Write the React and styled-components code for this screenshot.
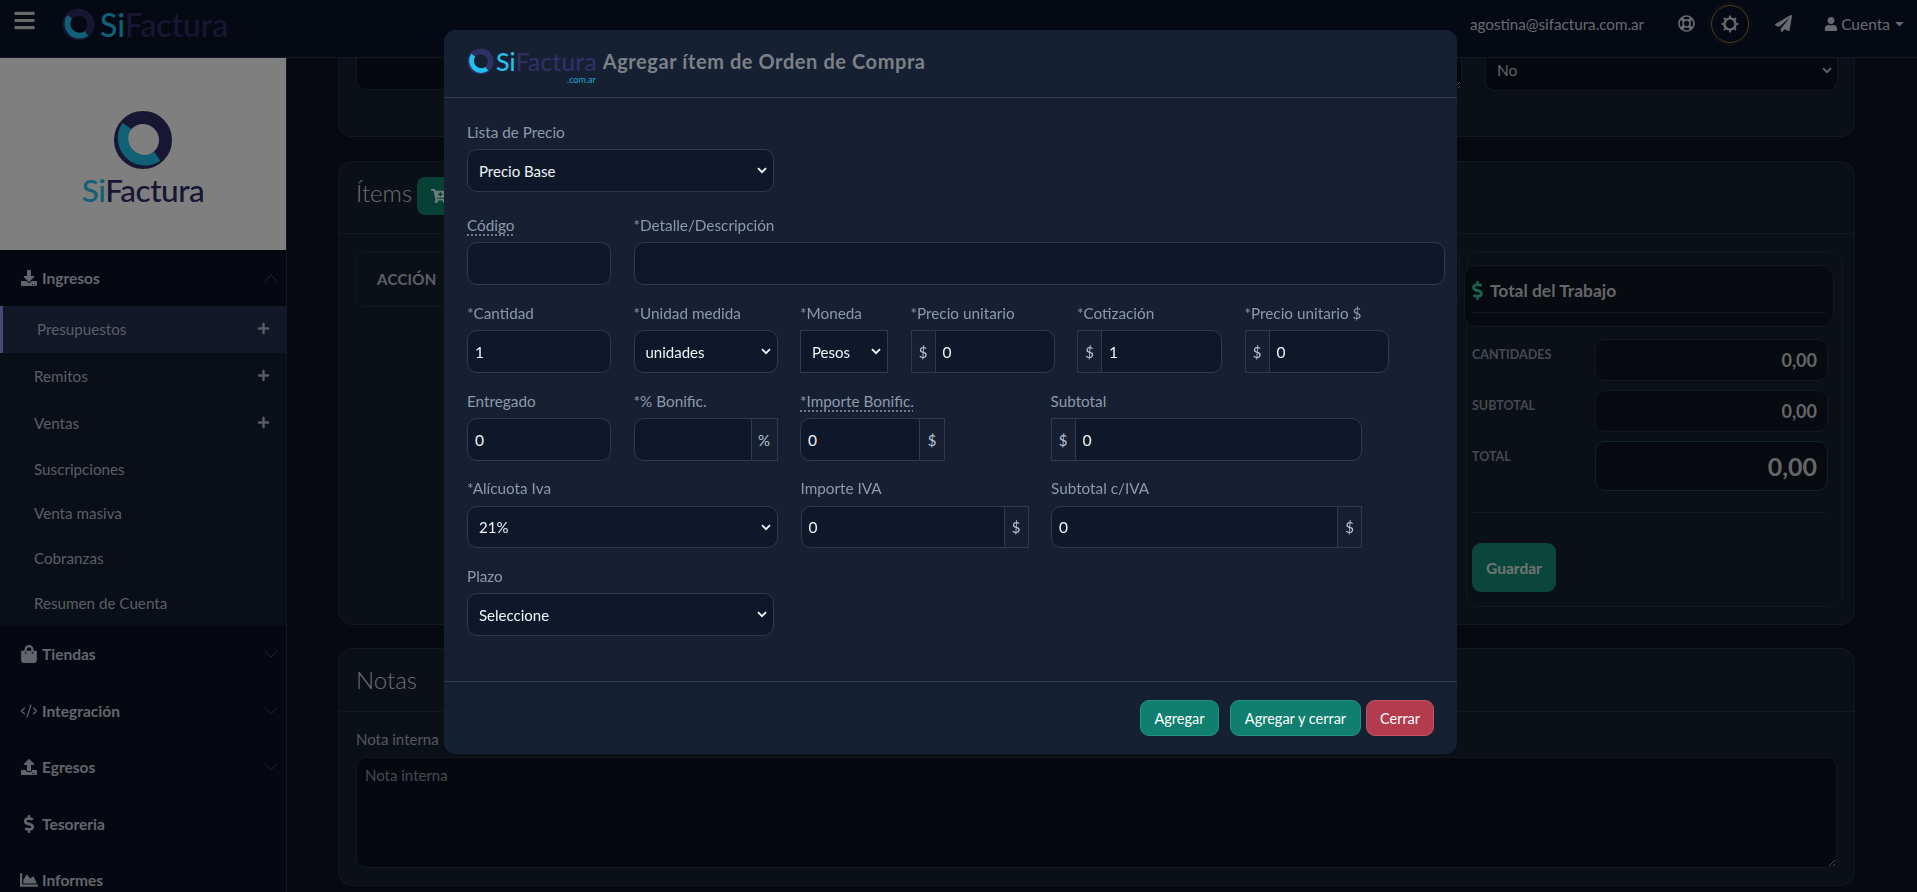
import React from "react";
import styled, { createGlobalStyle } from "styled-components";
import {
  FaBars, FaDownload, FaShoppingBag, FaUpload, FaDollarSign, FaChartArea,
  FaPlus, FaRegLifeRing, FaPaperPlane, FaUser, FaCartPlus, FaCaretDown,
} from "react-icons/fa";
import { ChevronDown, ChevronUp, CodeXml } from "lucide-react";

const chevronSvg = (color) =>
  `url("data:image/svg+xml,%3Csvg xmlns='http://www.w3.org/2000/svg' viewBox='0 0 10 7'%3E%3Cpath d='M1 1.2l4 4 4-4' fill='none' stroke='${color}' stroke-width='1.9'/%3E%3C/svg%3E")`;

const Global = createGlobalStyle`
  html, body { margin: 0; padding: 0; height: 100%; overflow: hidden; background: #0c121e; }
  * { box-sizing: border-box; }
  body { font-family: Lato, "Open Sans", sans-serif; font-size: 15px; color-scheme: dark; }
`;

const Page = styled.div`
  height: 892px; overflow: hidden; display: flex; flex-direction: column; background: #0c121e;
`;
const Navbar = styled.header`
  height: 58px; flex: none; display: flex; align-items: center; background: #0a1228;
  border-bottom: 1px solid #28304a; padding: 0 11px 10px 13px;
`;
const Burger = styled.span`
  color: #d0d3d8; font-size: 23px; display: flex; margin: -6px 26px 0 0;
`;
const LogoWrap = styled.span`
  display: inline-flex; align-items: center; gap: ${(p) => p.$gap}px; position: relative; margin-top: ${(p) => p.$top ?? 0}px;
`;
const LogoText = styled.span`
  font-size: ${(p) => p.$size}px; font-weight: 500; color: #2f2f66; line-height: 1; letter-spacing: ${(p) => p.$track}px;
  b { font-weight: 500; color: #22c0ec; }
`;
const NavRight = styled.div`
  margin-left: auto; display: flex; align-items: center; color: #d0d4da;
`;
const Email = styled.span`
  font-size: 15.2px; margin-right: 34px; color: #d0d4da;
`;
const NavIcon = styled.span`
  display: flex; font-size: 17px; color: #d0d4da;
`;
const GearButton = styled.span`
  width: 38px; height: 38px; border-radius: 50%; border: 1px solid #a8741a; margin: 0 26px 0 16px;
  display: flex; align-items: center; justify-content: center;
  box-shadow: 0 0 0 3px rgba(120, 120, 130, 0.1);
`;
const Account = styled.span`
  display: flex; align-items: center; gap: 3px; margin-left: 32px; font-size: 15.5px;
`;

const Body = styled.div`
  flex: 1; display: flex; min-height: 0;
`;
const Sidebar = styled.aside`
  width: 287px; flex: none; background: #0a1022; border-right: 1px solid #28304a; overflow: hidden;
`;
const BrandBox = styled.div`
  height: 192px; background: #fff; display: flex; flex-direction: column; align-items: center; padding-top: 52px; gap: 5px;
`;
const SectionRow = styled.div`
  height: 56.4px; display: flex; align-items: center; padding: 0 3px 0 20px; color: #c4cbd6; font-weight: 700; font-size: 15.5px;
`;
const SectionIcon = styled.span`
  width: 22px; display: flex; justify-content: center; font-size: ${(p) => p.$size ?? 16}px; flex: none; transform: translateX(-2px);
`;
const SectionLabel = styled.span`
  flex: 1;
`;
const Chevron = styled.span`
  display: flex; color: #4a5468;
`;
const SubMenu = styled.div`
  background: #141c2c;
`;
const SubRow = styled.div`
  height: ${(p) => (p.$plus ? 47 : 44.7)}px; display: flex; align-items: center; justify-content: space-between;
  padding: 0 16px 2px 34px; color: #b4bcc9; font-size: 15.2px;
  background: ${(p) => (p.$active ? "#243050" : "transparent")};
  border-left: ${(p) => (p.$active ? "3px solid #8f94f0" : "none")};
`;
const PlusIcon = styled.span`
  display: flex; font-size: 13px; color: #aeb7c6;
`;

const Main = styled.main`
  flex: 1; min-width: 0; padding: 0 62px 0 51px; overflow: hidden;
`;
const Card = styled.section`
  border: 1px solid #262e40; border-radius: 14px; background: #161e2c; margin-bottom: 23px;
`;
const TopCard = styled(Card)`
  height: 79px; border-top: none; border-radius: 0 0 14px 14px; padding: 0 17px; display: flex; gap: 23px; align-items: flex-start; margin-bottom: 24px;
`;
const DarkArea = styled.textarea`
  width: 1106px; height: 32px; flex: none; background: #0a101c; border: 1px solid #262e40; border-top: none; border-radius: 0 0 10px 10px;
  resize: vertical; color: #ccc; outline: none;
`;
const DarkSelect = styled.select`
  appearance: none; width: 353px; height: 33px; flex: none; border: 1px solid #262e40; border-top: none; border-radius: 0 0 10px 10px;
  background: #0a101c ${chevronSvg("%23c2c8d0")} no-repeat right 5px top 9px / 10px 7px;
  color: #c2c8d0; font: inherit; font-size: 15.5px; padding: 0 6px 8px 11px;
`;
const CardHeader = styled.div`
  height: ${(p) => p.$h}px; display: flex; align-items: center; gap: 5px; padding: 0 17px ${(p) => p.$pb}px; border-bottom: 1px solid #262e40;
`;
const CardTitle = styled.h2`
  margin: 0 0 ${(p) => p.$mb ?? 0}px; font-size: 24px; font-weight: 300; color: #d7dade;
`;
const GreenIconButton = styled.button`
  width: 80px; height: 38px; border: none; border-radius: 8px; background: #0f8068; color: #dfe; font-size: 16px;
  display: flex; align-items: center; padding-left: 14px;
`;
const ItemsBody = styled.div`
  display: flex; padding: 17px 11px 17px 16px; gap: 6px;
`;
const TableBox = styled.div`
  width: 1106px; height: 56px; border: 1px solid #262e40; border-radius: 10px; padding: 0 21px; display: flex; align-items: center;
  font-size: 15px; font-weight: 700; color: #b9c0cb; letter-spacing: 0.3px;
`;
const TotalsBox = styled.div`
  width: 377px; height: 356px; border: 1px solid #262e40; border-radius: 12px; padding: 13px 15px 0 5px;
`;
const TotalsHead = styled.div`
  width: 370px; margin: 0 0 12px -8px; height: 62px; border: 1px solid #262e40; border-radius: 12px; background: #0e141f; padding: 0 7px;
`;
const TotalsTitle = styled.div`
  height: 47px; padding-top: 3px; display: flex; align-items: center; gap: 3px; border-bottom: 1px solid #262e40; font-size: 17.4px; font-weight: 700; color: #c8ccd2;
  svg { color: #35c69c; font-size: 19px; margin-left: -4px; }
`;
const TotalRow = styled.div`
  display: grid; grid-template-columns: 123px 233px; margin-bottom: 9px; font-size: 12.5px; font-weight: 700; color: #8a92a2;
`;
const TotalLabel = styled.span`
  padding-top: 6px; line-height: 20px;
`;
const TotalValue = styled.div`
  height: ${(p) => (p.$big ? 50 : 42)}px; border: 1px solid ${(p) => (p.$big ? "#1d4a4c" : "#262e40")}; border-radius: 10px; background: #0e141f;
  display: flex; align-items: center; justify-content: flex-end; padding-right: 10px;
  font-size: ${(p) => (p.$big ? 25 : 18)}px; font-weight: 700; color: #c8ccd0;
`;
const TotalsRule = styled.hr`
  margin: 21px 0 30px; border: none; border-top: 1px solid #262e40;
`;
const SaveButton = styled.button`
  width: 84px; height: 49px; border: none; border-radius: 9px; background: #158d72; color: #e2e6e4; font: inherit; font-weight: 700; font-size: 15.5px;
`;
const NoteBody = styled.div`
  padding: 17px 17px 17px;
`;
const NoteLabel = styled.div`
  font-size: 15px; color: #a8b0bd; line-height: 20px; margin-bottom: 8px;
`;
const NoteArea = styled.textarea`
  display: block; width: 100%; height: 111px; background: #0a101c; border: 1px solid #262e40; border-radius: 10px; padding: 8px 8px;
  font: inherit; font-size: 15px; outline: none; color: #ccc;
  &::placeholder { color: #8a93a3; opacity: 1; }
`;

const Backdrop = styled.div`
  position: fixed; inset: 0; background: rgba(0, 0, 0, 0.5);
`;
const ModalLayer = styled.div`
  position: fixed; inset: 0; display: flex; justify-content: center; align-items: flex-start; padding: 30px 16px 0 0;
`;
const Modal = styled.div`
  width: 1013px; height: 724px; background: #172032; border-radius: 12px; display: flex; flex-direction: column;
`;
const ModalHeader = styled.div`
  height: 68px; flex: none; display: flex; align-items: center; gap: 6px; padding: 0 23px 5px; background: #152033; border-bottom: 1px solid #2c3a4e;
  border-radius: 12px 12px 0 0;
`;
const ComAr = styled.span`
  position: absolute; right: 1px; bottom: -9px; font-size: 9px; color: #22a8d0; line-height: 1;
`;
const ModalTitle = styled.h5`
  margin: 0; font-size: 20px; font-weight: 700; color: #7d8087; letter-spacing: 0.58px;
`;
const ModalBody = styled.div`
  flex: 1; padding: 24px 0 0 23px; display: flex; flex-direction: column;
`;
const FormRow = styled.div`
  display: grid; grid-template-columns: ${(p) => p.$cols}; column-gap: 22.5px; margin-bottom: ${(p) => p.$mb ?? 18}px;
`;
const Field = styled.div`
  min-width: 0;
`;
const Label = styled.label`
  display: block; width: fit-content; height: 20px; line-height: 20px; margin-bottom: ${(p) => p.$mb ?? 7}px; font-size: 15.3px; color: #8c99ab;
  ${(p) => p.$hint && "text-decoration: underline dotted #8c99ab; text-underline-offset: 4px;"}
`;
const TextInput = styled.input`
  width: 100%; height: ${(p) => p.$h ?? 43}px; flex: ${(p) => (p.$inGroup ? "1" : "none")}; min-width: 0; display: block; background: #0f182a; color: #f0f3f7; font: inherit; font-size: 15.5px;
  border: 1px solid #2c3a4e; border-radius: ${(p) => p.$radius ?? "10px"}; padding: 0 7px; outline: none;
`;
const SelectInput = styled.select`
  appearance: none; width: 100%; height: ${(p) => p.$h ?? 43}px; display: block;
  background: #0f182a ${chevronSvg("%23f0f3f7")} no-repeat right 6px center / 10px 7px;
  color: #f0f3f7; font: inherit; font-size: 15px;
  border: 1px solid #2c3a4e; border-radius: ${(p) => p.$radius ?? "10px"}; padding: 0 18px 0 11px; outline: none;
`;
const Group = styled.div`
  display: flex; width: ${(p) => p.$w ?? "100%"}; height: ${(p) => p.$h ?? 43}px;
`;
const Addon = styled.span`
  flex: none; width: ${(p) => p.$w ?? 24}px; display: flex; align-items: center; justify-content: center; color: #b6c3d4; font-size: 15px;
  border: 1px solid #2c3a4e; ${(p) => (p.$end ? "border-left: none;" : "border-right: none;")}
`;
const ModalFooter = styled.div`
  height: 73px; flex: none; display: flex; justify-content: flex-end; align-items: flex-start; padding: 18px 23px 0 0; border-top: 1px solid #2c3a4e;
  background: #152033; border-radius: 0 0 12px 12px;
`;
const ActionButton = styled.button`
  height: 36px; padding: 0; width: ${(p) => p.$w}px; margin-left: ${(p) => p.$ml}px; border-radius: 9px; font: inherit; font-size: 14.5px; color: #fff;
  background: ${(p) => (p.$danger ? "#b23b4d" : "#107f70")}; border: 1px solid ${(p) => (p.$danger ? "#c65266" : "#1f9484")};
`;

function Ring({ size, dark = "#2f2f66", teal = "#22c0ec" }) {
  return (
    <svg width={size} height={size} viewBox="0 0 60 60" aria-hidden="true">
      <circle cx="30" cy="30" r="22.5" fill="none" stroke={dark} strokeWidth="13" />
      <path d="M15.2 14.5 A22 22 0 0 0 45.8 45" fill="none" stroke={teal} strokeWidth="10.5" transform="translate(-1.4 1.4)" />
    </svg>
  );
}

function GearGlyph() {
  const teeth = [0, 45, 90, 135, 180, 225, 270, 315];
  return (
    <svg width="18" height="18" viewBox="0 0 18 18" aria-hidden="true">
      <circle cx="9" cy="9" r="5.6" fill="none" stroke="#d0d4da" strokeWidth="2.4" />
      {teeth.map((a) => (
        <rect key={a} x="8" y="0.6" width="2" height="2.2" fill="#d0d4da" transform={`rotate(${a} 9 9)`} />
      ))}
    </svg>
  );
}

const menuTop = [["Presupuestos", true], ["Remitos", true], ["Ventas", true]];
const menuRest = ["Suscripciones", "Venta masiva", "Cobranzas", "Resumen de Cuenta"];
const sections = [
  [<FaShoppingBag key="a" />, "Tiendas", true, 18],
  [<CodeXml key="b" size={18} strokeWidth={1.5} />, "Integración", true, 16],
  [<FaUpload key="c" />, "Egresos", true, 16],
  [<FaDollarSign key="d" />, "Tesoreria", false, 18],
  [<FaChartArea key="e" />, "Informes", false, 18],
];

export default function App() {
  return (
    <Page>
      <Global />
      <Navbar>
        <Burger><FaBars /></Burger>
        <LogoWrap $gap={5} $top={2}>
          <Ring size={33} />
          <LogoText $size={32} $track={-0.1}><b>Si</b>Factura</LogoText>
        </LogoWrap>
        <NavRight>
          <Email>agostina@sifactura.com.ar</Email>
          <NavIcon><FaRegLifeRing /></NavIcon>
          <GearButton><GearGlyph /></GearButton>
          <NavIcon><FaPaperPlane /></NavIcon>
          <Account><FaUser size={14} /> Cuenta <FaCaretDown size={13} /></Account>
        </NavRight>
      </Navbar>
      <Body>
        <Sidebar>
          <BrandBox>
            <Ring size={60} />
            <LogoText $size={31.5} $track={-0.5}><b>Si</b>Factura</LogoText>
          </BrandBox>
          <SectionRow>
            <SectionIcon><FaDownload /></SectionIcon>
            <SectionLabel>Ingresos</SectionLabel>
            <Chevron><ChevronUp size={24} strokeWidth={0.8} /></Chevron>
          </SectionRow>
          <SubMenu>
            {menuTop.map(([name], i) => (
              <SubRow key={name} $plus $active={i === 0}>
                {name}
                <PlusIcon><FaPlus /></PlusIcon>
              </SubRow>
            ))}
            {menuRest.map((name) => (
              <SubRow key={name}>{name}</SubRow>
            ))}
          </SubMenu>
          {sections.map(([icon, name, chev, size]) => (
            <SectionRow key={name}>
              <SectionIcon $size={size}>{icon}</SectionIcon>
              <SectionLabel>{name}</SectionLabel>
              {chev && <Chevron><ChevronDown size={24} strokeWidth={0.8} /></Chevron>}
            </SectionRow>
          ))}
        </Sidebar>
        <Main>
          <TopCard>
            <DarkArea readOnly />
            <DarkSelect defaultValue="No"><option>No</option></DarkSelect>
          </TopCard>
          <Card>
            <CardHeader $h={72} $pb={4}>
              <CardTitle $mb={6}>Ítems</CardTitle>
              <GreenIconButton aria-label="Carrito"><FaCartPlus /></GreenIconButton>
            </CardHeader>
            <ItemsBody>
              <TableBox>ACCIÓN</TableBox>
              <TotalsBox>
                <TotalsHead>
                  <TotalsTitle><FaDollarSign /> Total del Trabajo</TotalsTitle>
                </TotalsHead>
                <TotalRow><TotalLabel>CANTIDADES</TotalLabel><TotalValue>0,00</TotalValue></TotalRow>
                <TotalRow><TotalLabel>SUBTOTAL</TotalLabel><TotalValue>0,00</TotalValue></TotalRow>
                <TotalRow><TotalLabel>TOTAL</TotalLabel><TotalValue $big>0,00</TotalValue></TotalRow>
                <TotalsRule />
                <SaveButton>Guardar</SaveButton>
              </TotalsBox>
            </ItemsBody>
          </Card>
          <Card>
            <CardHeader $h={63} $pb={2}><CardTitle>Notas</CardTitle></CardHeader>
            <NoteBody>
              <NoteLabel>Nota interna</NoteLabel>
              <NoteArea placeholder="Nota interna" readOnly />
            </NoteBody>
          </Card>
        </Main>
      </Body>
      <Backdrop />
      <ModalLayer>
        <Modal>
          <ModalHeader>
            <LogoWrap $gap={2}>
              <Ring size={27} />
              <LogoText $size={25} $track={0}><b>Si</b>Factura</LogoText>
              <ComAr>.com.ar</ComAr>
            </LogoWrap>
            <ModalTitle>Agregar ítem de Orden de Compra</ModalTitle>
          </ModalHeader>
          <ModalBody>
            <FormRow $cols="307px" $mb={23}>
              <Field>
                <Label>Lista de Precio</Label>
                <SelectInput defaultValue="Precio Base"><option>Precio Base</option></SelectInput>
              </Field>
            </FormRow>
            <FormRow $cols="144px 811px">
              <Field><Label $hint>Código</Label><TextInput readOnly /></Field>
              <Field><Label>*Detalle/Descripción</Label><TextInput readOnly /></Field>
            </FormRow>
            <FormRow $cols="144px 144px 88px 144px 145px 144px">
              <Field><Label>*Cantidad</Label><TextInput readOnly value="1" /></Field>
              <Field>
                <Label>*Unidad medida</Label>
                <SelectInput defaultValue="unidades"><option>unidades</option></SelectInput>
              </Field>
              <Field>
                <Label>*Moneda</Label>
                <SelectInput $radius="0" defaultValue="Pesos"><option>Pesos</option></SelectInput>
              </Field>
              <Field>
                <Label>*Precio unitario</Label>
                <Group><Addon>$</Addon><TextInput $inGroup $radius="0 10px 10px 0" readOnly value="0" /></Group>
              </Field>
              <Field>
                <Label>*Cotización</Label>
                <Group><Addon>$</Addon><TextInput $inGroup $radius="0 10px 10px 0" readOnly value="1" /></Group>
              </Field>
              <Field>
                <Label>*Precio unitario $</Label>
                <Group><Addon>$</Addon><TextInput $inGroup $radius="0 10px 10px 0" readOnly value="0" /></Group>
              </Field>
            </FormRow>
            <FormRow $cols="144px 144px 228px 311px" $mb={17}>
              <Field><Label>Entregado</Label><TextInput readOnly value="0" /></Field>
              <Field>
                <Label>*% Bonific.</Label>
                <Group><TextInput $inGroup $radius="10px 0 0 10px" readOnly /><Addon $end $w={26}>%</Addon></Group>
              </Field>
              <Field>
                <Label $hint>*Importe Bonific.</Label>
                <Group $w="145px"><TextInput $inGroup $radius="10px 0 0 10px" readOnly value="0" /><Addon $end $w={25}>$</Addon></Group>
              </Field>
              <Field>
                <Label>Subtotal</Label>
                <Group><Addon>$</Addon><TextInput $inGroup $radius="0 10px 10px 0" readOnly value="0" /></Group>
              </Field>
            </FormRow>
            <FormRow $cols="311px 228px 311px">
              <Field>
                <Label $mb={8}>*Alícuota Iva</Label>
                <SelectInput $h={42} defaultValue="21%"><option>21%</option></SelectInput>
              </Field>
              <Field>
                <Label $mb={8}>Importe IVA</Label>
                <Group $h={42}><TextInput $h={42} $inGroup $radius="10px 0 0 10px" readOnly value="0" /><Addon $end>$</Addon></Group>
              </Field>
              <Field>
                <Label $mb={8}>Subtotal c/IVA</Label>
                <Group $h={42}><TextInput $h={42} $inGroup $radius="10px 0 0 10px" readOnly value="0" /><Addon $end>$</Addon></Group>
              </Field>
            </FormRow>
            <FormRow $cols="307px" $mb={0}>
              <Field>
                <Label>Plazo</Label>
                <SelectInput defaultValue="Seleccione"><option>Seleccione</option></SelectInput>
              </Field>
            </FormRow>
          </ModalBody>
          <ModalFooter>
            <ActionButton $w={79} $ml={0}>Agregar</ActionButton>
            <ActionButton $w={131} $ml={11}>Agregar y cerrar</ActionButton>
            <ActionButton $w={68} $ml={5} $danger>Cerrar</ActionButton>
          </ModalFooter>
        </Modal>
      </ModalLayer>
    </Page>
  );
}
